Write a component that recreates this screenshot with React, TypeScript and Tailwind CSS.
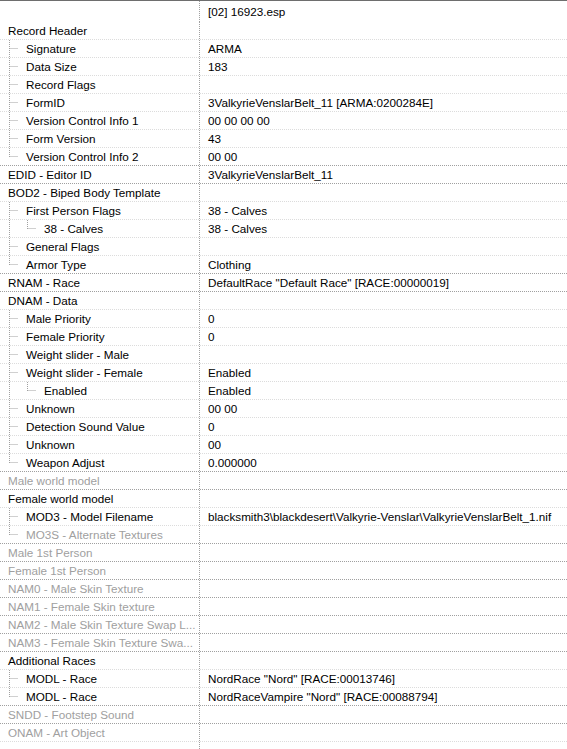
import React from "react";

type Row = { t: string; v?: string; d: number; g?: boolean };

const rows: Row[] = [
  { t: "Record Header", d: 0 },
  { t: "Signature", v: "ARMA", d: 1 },
  { t: "Data Size", v: "183", d: 1 },
  { t: "Record Flags", d: 1 },
  { t: "FormID", v: "3ValkyrieVenslarBelt_11 [ARMA:0200284E]", d: 1 },
  { t: "Version Control Info 1", v: "00 00 00 00", d: 1 },
  { t: "Form Version", v: "43", d: 1 },
  { t: "Version Control Info 2", v: "00 00", d: 1 },
  { t: "EDID - Editor ID", v: "3ValkyrieVenslarBelt_11", d: 0 },
  { t: "BOD2 - Biped Body Template", d: 0 },
  { t: "First Person Flags", v: "38 - Calves", d: 1 },
  { t: "38 - Calves", v: "38 - Calves", d: 2 },
  { t: "General Flags", d: 1 },
  { t: "Armor Type", v: "Clothing", d: 1 },
  { t: "RNAM - Race", v: 'DefaultRace "Default Race" [RACE:00000019]', d: 0 },
  { t: "DNAM - Data", d: 0 },
  { t: "Male Priority", v: "0", d: 1 },
  { t: "Female Priority", v: "0", d: 1 },
  { t: "Weight slider - Male", d: 1 },
  { t: "Weight slider - Female", v: "Enabled", d: 1 },
  { t: "Enabled", v: "Enabled", d: 2 },
  { t: "Unknown", v: "00 00", d: 1 },
  { t: "Detection Sound Value", v: "0", d: 1 },
  { t: "Unknown", v: "00", d: 1 },
  { t: "Weapon Adjust", v: "0.000000", d: 1 },
  { t: "Male world model", d: 0, g: true },
  { t: "Female world model", d: 0 },
  { t: "MOD3 - Model Filename", v: "blacksmith3\\blackdesert\\Valkyrie-Venslar\\ValkyrieVenslarBelt_1.nif", d: 1 },
  { t: "MO3S - Alternate Textures", d: 1, g: true },
  { t: "Male 1st Person", d: 0, g: true },
  { t: "Female 1st Person", d: 0, g: true },
  { t: "NAM0 - Male Skin Texture", d: 0, g: true },
  { t: "NAM1 - Female Skin texture", d: 0, g: true },
  { t: "NAM2 - Male Skin Texture Swap L...", d: 0, g: true },
  { t: "NAM3 - Female Skin Texture Swa...", d: 0, g: true },
  { t: "Additional Races", d: 0 },
  { t: "MODL - Race", v: 'NordRace "Nord" [RACE:00013746]', d: 1 },
  { t: "MODL - Race", v: 'NordRaceVampire "Nord" [RACE:00088794]', d: 1 },
  { t: "SNDD - Footstep Sound", d: 0, g: true },
  { t: "ONAM - Art Object", d: 0, g: true },
];

const isLast = (i: number) => {
  const d = rows[i].d;
  for (let j = i + 1; j < rows.length; j++) {
    if (rows[j].d < d) return true;
    if (rows[j].d === d) return false;
  }
  return true;
};

const ancestor = (i: number, depth: number) => {
  for (let j = i - 1; j >= 0; j--) if (rows[j].d === depth) return j;
  return -1;
};

// dotted tree connectors for one row
const Lines = ({ i }: { i: number }) => {
  const d = rows[i].d;
  if (d === 0) return null;
  const parts: React.ReactNode[] = [];
  for (let c = 0; c < d - 1; c++) {
    const a = ancestor(i, c + 1);
    if (a >= 0 && !isLast(a)) {
      const x = c * 18 + 9.5;
      parts.push(<line key={"p" + c} x1={x} y1={0} x2={x} y2={17} />);
    }
  }
  const x = (d - 1) * 18 + 9.5;
  parts.push(<line key="v" x1={x} y1={0} x2={x} y2={isLast(i) ? 9 : 17} />);
  parts.push(<line key="h" x1={x + 1} y1={8.5} x2={x + 13} y2={8.5} />);
  return (
    <svg width={d * 18} height={17} className="shrink-0" stroke="#a0a0a0" strokeWidth={1} strokeDasharray="1 1" fill="none">
      {parts}
    </svg>
  );
};

export default function App() {
  return (
    <div className="flex h-[749px] w-full flex-col overflow-hidden border-t border-[#6e6e6e] bg-white font-['Liberation_Sans',sans-serif] text-[11.7px] text-black">
      <div className="flex h-[21px] shrink-0">
        <div className="w-[200px] shrink-0 border-r border-dotted border-[#a0a0a0]" />
        <div className="flex items-center pl-[8px] leading-[17px]">[02] 16923.esp</div>
      </div>
      {rows.map((r, i) => {
        const next = rows[i + 1];
        const dark = next && next.d === 0;
        return (
          <div
            key={i}
            className={
              "flex h-[18px] shrink-0 border-b border-dotted " +
              (dark ? "border-[#a0a0a0]" : "border-[#dcdcdc]")
            }
          >
            <div className="flex w-[200px] shrink-0 items-center overflow-hidden border-r border-dotted border-[#a0a0a0]">
              <Lines i={i} />
              <span className={"whitespace-nowrap pl-[8px] leading-[17px] " + (r.g ? "text-[#a0a0a0]" : "")}>
                {r.t}
              </span>
            </div>
            <div className="flex min-w-0 items-center whitespace-nowrap pl-[8px] leading-[17px]">{r.v}</div>
          </div>
        );
      })}
      <div className="flex flex-1">
        <div className="w-[200px] shrink-0 border-r border-dotted border-[#a0a0a0]" />
      </div>
    </div>
  );
}
